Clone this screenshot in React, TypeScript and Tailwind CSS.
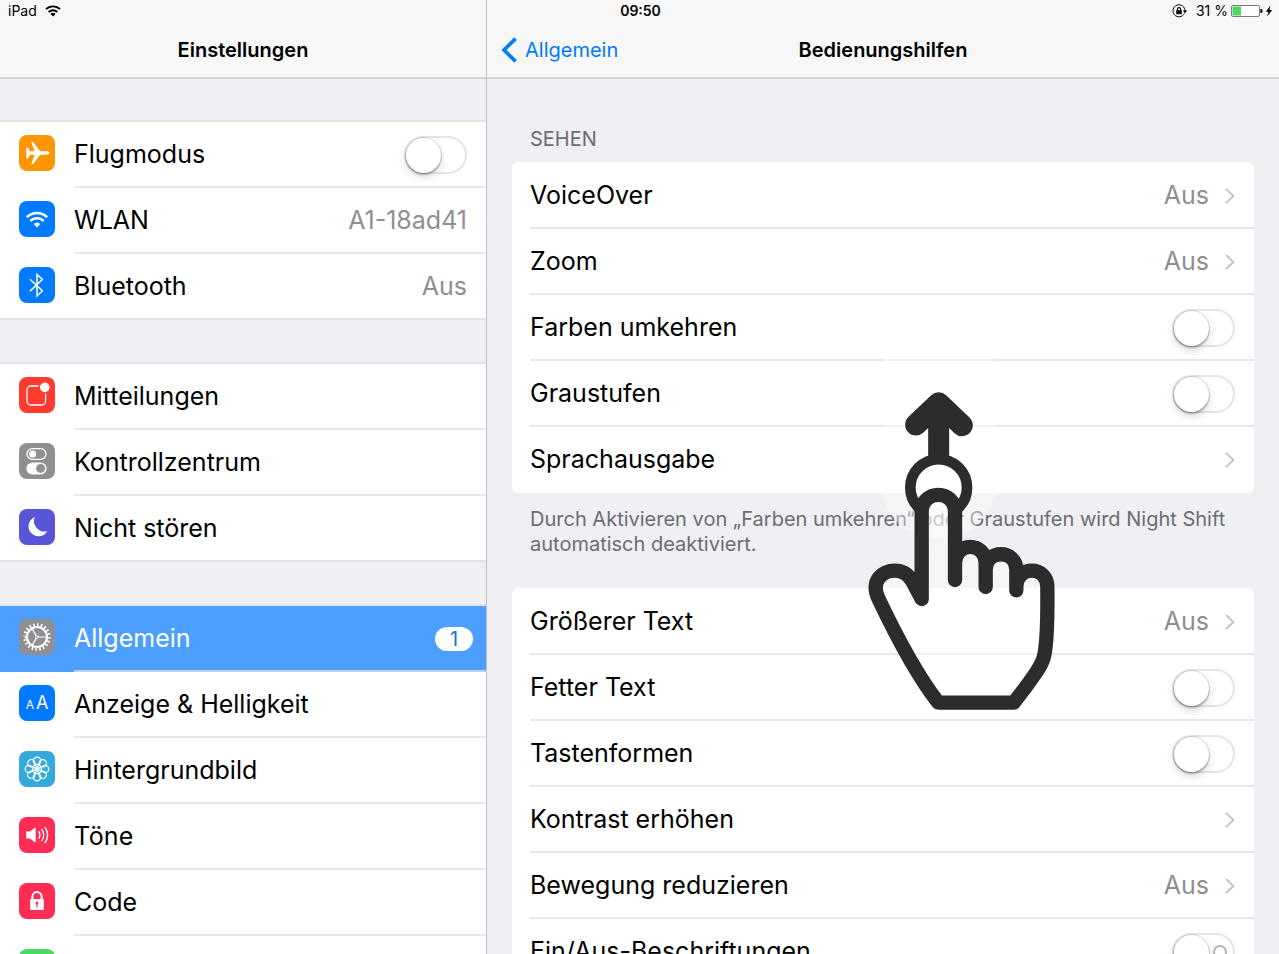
import { Fragment, type ReactNode } from 'react';

type SidebarItem = {
  label: string;
  icon: ReactNode;
  color: string;
  value?: string;
  toggle?: boolean;
  badge?: number;
  selected?: boolean;
};

type SettingItem = {
  label: string;
  value?: string;
  toggle?: boolean;
  marked?: boolean;
};

const petals = [0, 45, 90, 135, 180, 225, 270, 315];

const icons = {
  plane: (
    <path
      fill="white"
      d="M30.5 18c0-1.2-1.2-1.7-3-1.7h-6.3L14.4 7.3c-.6-.6-2-.4-1.8.6l2.9 8.4h-4.6L9 12.4H7.3v11.2H9l1.9-3.9h4.6l-2.9 8.4c-.2 1 1.2 1.2 1.8.6l6.8-9h6.3c1.8 0 3-.5 3-1.7z"
    />
  ),
  wifi: (
    <g fill="none" stroke="white" strokeWidth="2.5">
      <path d="M7.8 16.2a14.5 14.5 0 0 1 20.4 0" />
      <path d="M11.3 20a9.6 9.6 0 0 1 13.4 0" />
      <path d="M18 26.5l-3.3-3.4a4.8 4.8 0 0 1 6.6 0z" fill="white" stroke="none" />
    </g>
  ),
  bluetooth: <path fill="none" stroke="white" strokeWidth="1.5" d="M11 12.3l12.4 11.4L18 29V7.5l5.4 5L11 24.1" />,
  notifications: (
    <g>
      <rect x="8" y="9" width="18.6" height="19" rx="4" fill="none" stroke="white" strokeWidth="1.3" />
      <circle cx="25.8" cy="10.4" r="5.6" fill="white" stroke="#ff3b30" strokeWidth="1.6" />
    </g>
  ),
  control: (
    <g>
      <rect x="8" y="5.6" width="19" height="10.8" rx="5.4" fill="none" stroke="white" strokeWidth="1.3" />
      <circle cx="13.6" cy="11" r="3.6" fill="white" />
      <rect x="7.4" y="19.4" width="20.2" height="12" rx="6" fill="white" />
      <circle cx="21.6" cy="25.4" r="4.5" fill="#8e8e93" />
    </g>
  ),
  moon: <path fill="white" d="M15.8 8a10 10 0 1 0 12.4 14.2A10.6 10.6 0 0 1 15.8 8z" />,
  gear: (
    <g fill="none" stroke="white">
      <circle cx="18" cy="18" r="10" strokeWidth="2" />
      <circle cx="18" cy="18" r="12.3" strokeWidth="3" pathLength="220" strokeDasharray="4.6 6.4" />
      <path strokeWidth="1.2" d="M20.2 18h7.4M16.9 16.1l-3.9-6.7M16.9 19.9L13 26.6" />
      <path strokeWidth="1" d="M20.2 18l-3.3 1.9v-3.8z" />
    </g>
  ),
  flower: (
    <g fill="none" stroke="white" strokeWidth="1.2">
      {petals.map((angle) => (
        <circle key={angle} cx="18" cy="9.9" r="3.7" transform={`rotate(${angle} 18 18)`} />
      ))}
      {petals.map((angle) => (
        <path key={angle} strokeWidth="0.9" d="M18 18c-1.8-1.6-1.8-3.4 0-5c1.8 1.6 1.8 3.4 0 5z" transform={`rotate(${angle} 18 18)`} />
      ))}
    </g>
  ),
  speaker: (
    <g fill="none" stroke="white" strokeWidth="1.4">
      <path d="M7.2 14.4h3.6l5.8-4.2v15.6l-5.8-4.2H7.2z" fill="white" stroke="none" />
      <path d="M19.6 14.4a6 6 0 0 1 0 7.2M22.6 12a10 10 0 0 1 0 12M25.8 9.8a13.6 13.6 0 0 1 0 16.4" />
    </g>
  ),
  lock: (
    <g>
      <path d="M13.4 17v-3.4a4.6 4.6 0 0 1 9.2 0V17" fill="none" stroke="white" strokeWidth="2" />
      <rect x="11.2" y="16" width="13.6" height="11" rx="0.8" fill="white" />
      <path d="M17.4 21h1.2v3.6h-1.2z" fill="#ff2d55" />
      <circle cx="18" cy="20" r="1.5" fill="#ff2d55" />
    </g>
  ),
  battery: <rect x="7" y="13" width="20" height="10" rx="2" fill="white" />
};

const sidebarGroups: SidebarItem[][] = [
  [
    { label: 'Flugmodus', icon: icons.plane, color: 'bg-[#ff9500]', toggle: true },
    { label: 'WLAN', icon: icons.wifi, color: 'bg-[#007aff]', value: 'A1-18ad41' },
    { label: 'Bluetooth', icon: icons.bluetooth, color: 'bg-[#007aff]', value: 'Aus' }
  ],
  [
    { label: 'Mitteilungen', icon: icons.notifications, color: 'bg-[#ff3b30]' },
    { label: 'Kontrollzentrum', icon: icons.control, color: 'bg-[#8e8e93]' },
    { label: 'Nicht stören', icon: icons.moon, color: 'bg-[#5856d6]' }
  ],
  [
    { label: 'Allgemein', icon: icons.gear, color: 'bg-[#8e8e93]', badge: 1, selected: true },
    { label: 'Anzeige & Helligkeit', icon: null, color: 'bg-[#007aff]' },
    { label: 'Hintergrundbild', icon: icons.flower, color: 'bg-[#34aadc]' },
    { label: 'Töne', icon: icons.speaker, color: 'bg-[#ff2d55]' },
    { label: 'Code', icon: icons.lock, color: 'bg-[#ff2d55]' },
    { label: '', icon: icons.battery, color: 'bg-[#4cd964]' }
  ]
];

const visionItems: SettingItem[] = [
  { label: 'VoiceOver', value: 'Aus' },
  { label: 'Zoom', value: 'Aus' },
  { label: 'Farben umkehren', toggle: true },
  { label: 'Graustufen', toggle: true },
  { label: 'Sprachausgabe' }
];

const displayItems: SettingItem[] = [
  { label: 'Größerer Text', value: 'Aus' },
  { label: 'Fetter Text', toggle: true },
  { label: 'Tastenformen', toggle: true },
  { label: 'Kontrast erhöhen' },
  { label: 'Bewegung reduzieren', value: 'Aus' },
  { label: 'Ein/Aus-Beschriftungen', toggle: true, marked: true }
];

export default function App() {
  return (
    <div className="relative flex h-screen overflow-hidden bg-[#efeff4] font-['Inter',sans-serif] text-[25px] text-black">
      <StatusBar />

      <aside className="w-[38%] shrink-0">
        <header className="flex h-[79px] items-end justify-center border-b-2 border-[#d3d3d7] bg-[#f7f7f8] pb-[11px]">
          <h1 className="text-xl font-semibold leading-8">Einstellungen</h1>
        </header>
        <nav className="flex flex-col gap-[42px] pt-[41px]">
          {sidebarGroups.map((group) => (
            <ul key={group[0].label} className="border-y-2 border-[#e3e3e7] bg-white">
              {group.map((item) => (
                <Fragment key={item.label}>
                  <SidebarRow {...item} />
                </Fragment>
              ))}
            </ul>
          ))}
        </nav>
      </aside>

      <main className="relative min-w-0 flex-1 border-l border-[#bfbfc3]">
        <header className="grid h-[79px] grid-cols-[1fr_auto_1fr] items-end border-b-2 border-[#d3d3d7] bg-[#f7f7f8] pb-[11px]">
          <a href="#allgemein" className="flex items-center gap-2 pl-3.5 text-xl leading-8 text-[#007aff]">
            <svg className="h-[26px] w-4" viewBox="0 0 16 26" fill="none" stroke="currentColor" strokeWidth="3.6">
              <path d="M14.6 1.6L3 13l11.6 11.4" />
            </svg>
            Allgemein
          </a>
          <h2 className="text-xl font-semibold leading-8">Bedienungshilfen</h2>
        </header>

        <div className="px-[25px]">
          <h3 className="px-[18px] pt-12 pb-[11px] text-xl leading-6 text-[#6d6d72]">SEHEN</h3>
          <SettingCard items={visionItems} />
          <p className="px-[18px] pt-3.5 pb-[31px] text-xl leading-[25px] text-[#6d6d72]">
            Durch Aktivieren von „Farben umkehren“ oder Graustufen wird Night Shift automatisch deaktiviert.
          </p>
          <SettingCard items={displayItems} />
        </div>

        <SwipeHint />
      </main>
    </div>
  );
}

function StatusBar() {
  return (
    <div className="absolute inset-x-0 top-0 z-10 grid h-[21px] grid-cols-[1fr_auto_1fr] items-center pr-1.5 pl-2 text-sm">
      <div className="flex items-center gap-2">
        iPad
        <svg className="h-3 w-4" viewBox="0 0 16 12" fill="none" stroke="black" strokeWidth="1.8">
          <path d="M1 4.2a10 10 0 0 1 14 0M3.6 7a6.4 6.4 0 0 1 8.8 0" />
          <path d="M8 11.6L5.4 9a3.8 3.8 0 0 1 5.2 0z" fill="black" stroke="none" />
        </svg>
      </div>
      <time className="font-semibold">09:50</time>
      <div className="flex items-center justify-end">
        <svg className="mr-2 h-3.5 w-4" viewBox="0 0 16 14" fill="none" stroke="black">
          <path strokeWidth="1" d="M12.4 9.4A6 6 0 1 1 13 7" />
          <path d="M10.8 6.6h4.4L13 9.2z" fill="black" stroke="none" />
          <rect x="4.2" y="6.2" width="5.6" height="4" fill="black" stroke="none" />
          <path strokeWidth="1.1" d="M5.4 6.4V5.2a1.6 1.6 0 0 1 3.2 0v1.2" />
        </svg>
        <span>31 %</span>
        <svg className="ml-[3px] h-3 w-8" viewBox="0 0 32 12">
          <rect x="0.5" y="0.5" width="28" height="11" rx="1.5" fill="white" stroke="#7b7b7d" />
          <rect x="1.5" y="1.5" width="8.5" height="9" fill="#4cd964" />
          <path d="M29.4 4h.8a1.4 2 0 0 1 0 4h-.8z" fill="black" />
        </svg>
        <svg className="ml-0.5 h-3 w-2" viewBox="0 0 8 12">
          <path d="M5.4.6L.8 6.8h2.6L2.2 11.4 7.2 5H4.4z" fill="black" />
        </svg>
      </div>
    </div>
  );
}

function SidebarRow({ label, icon, color, value, toggle, badge, selected }: SidebarItem) {
  const Row = toggle ? 'label' : 'a';

  return (
    <li className={`group h-[66px] last:h-16 ${selected ? 'bg-[#4c9fff] text-white' : ''}`}>
      <Row href={toggle ? undefined : '#'} className="flex h-full gap-[19px] pl-[19px]">
        <span className={`mt-[13px] flex size-9 shrink-0 items-center justify-center rounded-lg ${color}`}>
          {icon ? (
            <svg className="size-9" viewBox="0 0 36 36">
              {icon}
            </svg>
          ) : (
            <span className="flex items-baseline gap-0.5 text-lg leading-none text-white">
              <span className="text-xs leading-none">A</span>A
            </span>
          )}
        </span>
        <span
          className={`flex flex-1 items-center justify-between border-b-2 pt-0.5 pr-[19px] group-last:border-b-0 ${selected ? 'border-[#b9cfec]' : 'border-[#e8e8eb]'}`}
        >
          {label}
          {value && <span className="text-[#8e8e93]">{value}</span>}
          {toggle && <Toggle />}
          {badge && (
            <span className="-mr-1.5 w-[38px] rounded-full bg-white text-center text-xl leading-6 text-[#1a6fe0]">{badge}</span>
          )}
        </span>
      </Row>
    </li>
  );
}

function SettingCard({ items }: { items: SettingItem[] }) {
  return (
    <ul className="rounded-md bg-white pt-px pl-[18px]">
      {items.map((item) => (
        <li key={item.label} className="h-[66px] border-b-2 border-[#e8e8eb] last:border-transparent">
          {item.toggle ? (
            <label className="flex h-full items-center justify-between pt-0.5 pr-[19px]">
              {item.label}
              <Toggle marked={item.marked} />
            </label>
          ) : (
            <a href="#" className="flex h-full items-center justify-between pt-0.5 pr-[19px]">
              {item.label}
              <span className="flex items-center gap-4 text-[#8e8e93]">
                {item.value}
                <svg className="h-4 w-2.5" viewBox="0 0 10 16" fill="none" stroke="#c7c7cc" strokeWidth="2">
                  <path d="M1 1l7.4 7L1 15" />
                </svg>
              </span>
            </a>
          )}
        </li>
      ))}
    </ul>
  );
}

function Toggle({ marked }: { marked?: boolean }) {
  return (
    <span className="relative flex">
      <input
        type="checkbox"
        className="h-[38px] w-[63px] appearance-none rounded-full border-2 border-[#e5e5e5] bg-white before:block before:size-[35px] before:rounded-full before:bg-white before:shadow-[0_0_0_1px_rgba(0,0,0,0.12),0_2px_2px_rgba(0,0,0,0.25),0_4px_10px_rgba(0,0,0,0.15)]"
      />
      {marked && <span className="absolute top-3 right-2 size-3.5 rounded-full border-2 border-[#b4b4b4]"></span>}
    </span>
  );
}

function SwipeHint() {
  return (
    <svg className="pointer-events-none absolute top-[350px] left-[381px] h-[362px] w-[190px]" viewBox="84 0 570 1086" fill="none">
      {/* soft trail behind the finger */}
      <path d="M134 20H458L469 395A173 173 0 0 1 123 395z" fill="white" fillOpacity="0.4" />
      <circle cx="296" cy="413" r="80" fill="white" fillOpacity="0.6" />
      <g stroke="#2c2c2c" strokeLinejoin="round">
        <path
          strokeWidth="43"
          strokeLinecap="round"
          fill="white"
          fillOpacity="0.4"
          d="M245 747V485C245 418 345 418 345 485V690V640C345 574 437 574 437 640V711V660C437 597 529 597 529 660V721V710C529 646 622 646 622 710C623 800 622 870 613 915Q609 936 590 965Q560 1010 521 1058H295C230 975 172 865 115 745C90 690 130 662 165 662C190 662 206 676 216 692Z"
        />
        <path strokeWidth="32" d="M236 473A85 85 0 1 1 356 473" />
        <path strokeWidth="63" d="M296 170V335" />
        <path strokeWidth="65" strokeLinecap="round" fill="#2c2c2c" d="M228 224L296 159L366 226" />
      </g>
    </svg>
  );
}
